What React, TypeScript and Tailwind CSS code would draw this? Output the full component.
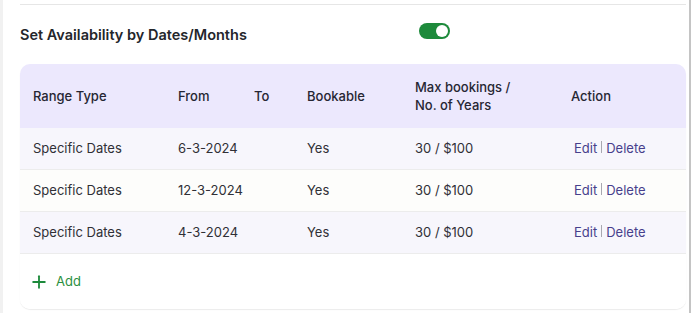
import { Plus } from "lucide-react";

const rows = [
  { type: "Specific Dates", from: "6-3-2024", bookable: "Yes", max: "30 / $100", bg: "bg-[#f7f6fc]" },
  { type: "Specific Dates", from: "12-3-2024", bookable: "Yes", max: "30 / $100", bg: "bg-[#fdfdfb]" },
  { type: "Specific Dates", from: "4-3-2024", bookable: "Yes", max: "30 / $100", bg: "bg-[#f7f6fc]" },
];

const cols = "grid grid-cols-[145px_76px_53px_108px_156px_1fr] pl-[13px] items-center";

export default function App() {
  return (
    <div className="flex h-[313px] w-[691px] bg-[#f1f1f1] font-['Inter',sans-serif] text-[13px]">
      <div className="ml-[3px] flex-1 bg-white pl-[17px] pr-[3px]">
        <div className="mt-[4px] h-px bg-[#e6e6e6]" />

        <div className="mt-[18px] flex items-start">
          <div className="mt-[2px] w-[399px] text-[14.5px] font-semibold leading-5 text-[#24262b]">
            Set Availability by Dates/Months
          </div>
          <div className="flex h-[16px] w-[31px] items-center justify-end rounded-full bg-[#1d8a3b] pr-[2px]">
            <div className="h-[12px] w-[12px] rounded-full bg-white" />
          </div>
        </div>

        <div className="mt-[19px] overflow-hidden rounded-[10px] shadow-[0_1px_1px_rgba(0,0,0,0.08)]">
          <div className={`${cols} h-[64px] bg-[#ece8fd] font-medium leading-[18px] text-[#262633]`}>
            <div>Range Type</div>
            <div>From</div>
            <div>To</div>
            <div>Bookable</div>
            <div>
              Max bookings /
              <br />
              No. of Years
            </div>
            <div>Action</div>
          </div>

          {rows.map((r, i) => (
            <div key={i} className={`${cols} h-[42px] border-b border-[#ececec] ${r.bg} text-[#303036]`}>
              <div>{r.type}</div>
              <div className="col-span-2">{r.from}</div>
              <div>{r.bookable}</div>
              <div>{r.max}</div>
              <div className="flex items-center pl-[3px] text-[#473f8c]">
                <span>Edit</span>
                <span className="mx-[4px] mb-[3px] h-[12px] w-px bg-[#a8a8b0]" />
                <span>Delete</span>
              </div>
            </div>
          ))}

          <div className="flex h-[55px] items-center bg-white pl-[9px] text-[#2b8f40]">
            <Plus size={20} strokeWidth={2.2} className="text-[#1d8a3b]" />
            <span className="ml-[7px]">Add</span>
          </div>
        </div>
      </div>
      <div className="w-[2px] bg-[#c4c4c4]" />
    </div>
  );
}
